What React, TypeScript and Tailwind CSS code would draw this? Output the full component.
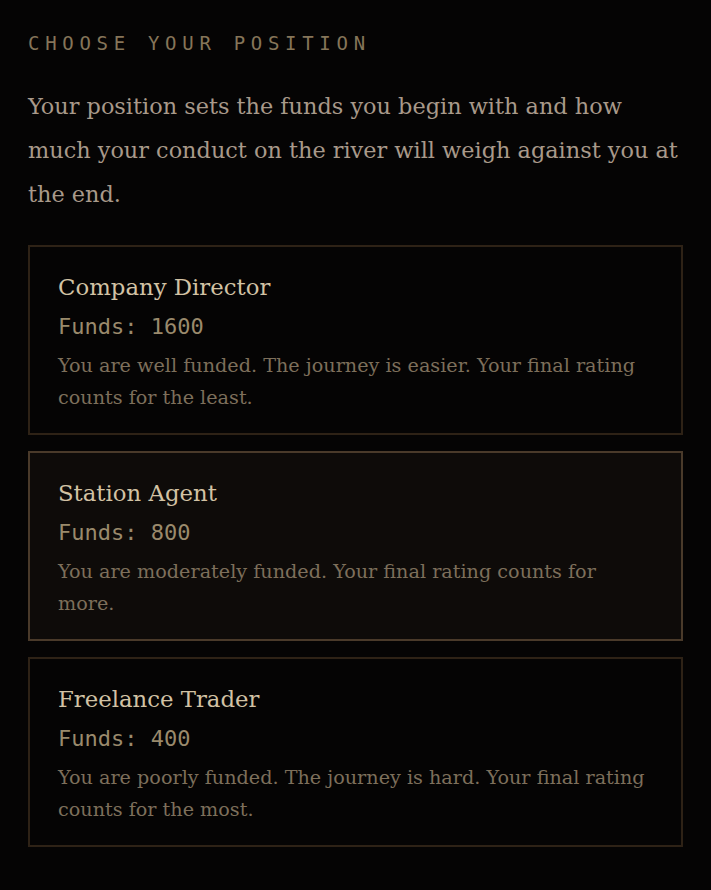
import React from "react";

type Position = {
  title: string;
  funds: number;
  text: string;
  active?: boolean;
};

const positions: Position[] = [
  {
    title: "Company Director",
    funds: 1600,
    text: "You are well funded. The journey is easier. Your final rating counts for the least.",
  },
  {
    title: "Station Agent",
    funds: 800,
    text: "You are moderately funded. Your final rating counts for more.",
    active: true,
  },
  {
    title: "Freelance Trader",
    funds: 400,
    text: "You are poorly funded. The journey is hard. Your final rating counts for the most.",
  },
];

const serif = "font-['DejaVu_Serif',Georgia,serif]";
const mono = "font-['DejaVu_Sans_Mono',monospace]";

function PositionCard({ p }: { p: Position }) {
  return (
    <button
      type="button"
      className={
        "block w-full text-left border-2 pl-[28px] pr-[32px] pt-[25px] pb-[19px] " +
        (p.active ? "bg-[#0e0b09] border-[#4a3a2a]" : "bg-[#050404] border-[#2e2216]")
      }
    >
      <div className={`${serif} text-[22.8px] leading-[30px] text-[#d2c2a4]`}>{p.title}</div>
      <div className={`${mono} text-[22px] leading-[30px] mt-[10px] text-[#9a8a6c]`}>Funds: {p.funds}</div>
      <p className={`${serif} text-[19.2px] leading-[32px] mt-[8px] text-[#7d6f5b]`}>{p.text}</p>
    </button>
  );
}

export default function App() {
  return (
    <div className="min-h-[890px] bg-[#050404] px-[28px] pt-[28px] pb-[40px]">
      <h2 className={`${mono} text-[19px] leading-[30px] tracking-[0.3em] text-[#857559]`}>
        CHOOSE YOUR POSITION
      </h2>
      <p className={`${serif} text-[22.4px] leading-[44px] mt-[26px] text-[#a8998a]`}>
        Your position sets the funds you begin with and how much your conduct on the river will weigh against you at
        the end.
      </p>
      <div className="mt-[29px] flex flex-col gap-[16px]">
        {positions.map((p) => (
          <PositionCard key={p.title} p={p} />
        ))}
      </div>
    </div>
  );
}
